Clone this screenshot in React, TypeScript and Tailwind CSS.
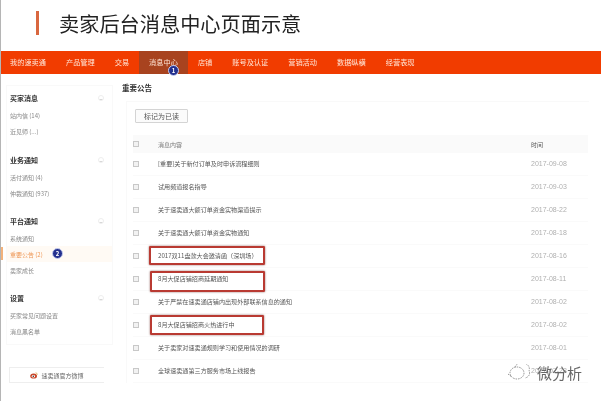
const nav = ["我的速卖通", "产品管理", "交易", "消息中心", "店铺", "账号及认证", "营销活动", "数据纵横", "经营表现"];

const sections = [
  { title: "买家消息", gap: "", items: ["站内信 (14)", "近见师 (...)"] },
  { title: "业务通知", gap: "mt-[14px]", items: ["活付通知 (4)", "仲裁通知 (937)"] },
  { title: "平台通知", gap: "mt-[13px]", items: ["系统通知", "重要公告 (2)", "卖家成长"] },
  { title: "设置", gap: "mt-[13px]", items: ["买家常见问题设置", "消息黑名单"] },
];

const rows = [
  { t: "[重要]关于新付订单及时申诉流程细则", d: "2017-09-08" },
  { t: "试用频道报名指导", d: "2017-09-03" },
  { t: "关于速卖通大额订单资金实物渠道提示", d: "2017-08-22" },
  { t: "关于速卖通大额订单资金实物通知", d: "2017-08-18" },
  { t: "2017双11盘款大会邀请函（深圳场）", d: "2017-08-16", box: "left-[16px] w-[116px] top-[1px] h-[19px]" },
  { t: "8月大促店铺招商延期通知", d: "2017-08-11", box: "left-[17px] w-[115px] top-[3px] h-[21px]" },
  { t: "关于严禁在速卖通店铺内出现外部联系信息的通知", d: "2017-08-02" },
  { t: "8月大促店铺招商火热进行中", d: "2017-08-02", box: "left-[17px] w-[114px] top-[1px] h-[20px]" },
  { t: "关于卖家对速卖通规则学习和使用情况的调研", d: "2017-08-01" },
  { t: "全球速卖通第三方服务市场上线报告", d: "2017-07-28" },
];

function Badge({ n, className }: { n: number; className: string }) {
  return (
    <span className={`absolute flex h-[11px] w-[11px] items-center justify-center rounded-full border border-[#c9d0f0] bg-[#23308f] text-[6px] font-bold leading-none text-white ${className}`}>
      {n}
    </span>
  );
}

function Check() {
  return <span className="block h-[6px] w-[6px] shrink-0 border border-[#c8c8c8] bg-[#f2f2f2]" />;
}

export default function App() {
  return (
    <div
      className="relative h-[401px] w-[601px] overflow-hidden border-l border-[#b5b5b5] bg-white blur-[0.35px]"
      style={{ fontFamily: '"Noto Sans CJK SC", "Liberation Sans", sans-serif' }}
    >
      <header className="flex h-[51px] items-start pl-[35px] pt-[11px]">
        <span className="h-[24px] w-[3px] bg-[#d9673f]" />
        <h1 className="ml-[20px] text-[20.2px] leading-[26px] text-[#222]">卖家后台消息中心页面示意</h1>
      </header>

      <nav className="flex h-[23px] items-stretch bg-[#f13c00] text-[7.2px] text-[#ffe5d6]">
        {nav.map((n, i) => (
          <span
            key={n}
            className={`flex items-center pr-[10px] ${i === 0 ? "pl-[9px]" : "pl-[10px]"} ${i === 3 ? "bg-[#a8431f]" : ""}`}
          >
            {n}
          </span>
        ))}
      </nav>
      <Badge n={1} className="left-[167px] top-[65px]" />

      <div className="flex items-start">
        <aside className="ml-[5px] w-[107px] shrink-0 pt-[11px]">
          <div className="h-[260px] border border-[#f9f9f9] pt-[5px]">
            {sections.map((s) => (
              <section key={s.title} className={s.gap}>
                <div className="flex h-[14px] items-center justify-between pl-[3px] pr-[8px] text-[7px] font-bold text-[#333]">
                  {s.title}
                  <span className="flex h-[6px] w-[6px] items-center justify-center rounded-full border border-[#eee] text-[5px] leading-none text-[#bbb]">−</span>
                </div>
                <ul className="pt-[2px]">
                  {s.items.map((it) => {
                    const on = it.startsWith("重要");
                    return (
                      <li
                        key={it}
                        className={`relative flex h-[16px] items-center pl-[3px] text-[6px] ${on ? "bg-[#fffaf4] text-[#ef9a5a]" : "text-[#888]"}`}
                      >
                        {on && <span className="absolute left-[-6px] top-[1px] h-[13px] w-[2px] bg-[#f2b27c]" />}
                        {it}
                        {on && <Badge n={2} className="left-[45px] top-[2px]" />}
                      </li>
                    );
                  })}
                </ul>
              </section>
            ))}
          </div>
          <div className="ml-[3px] mt-[22px] flex h-[16px] w-[95px] items-center justify-center gap-[3px] border border-[#eee] border-r-0 text-[6px] text-[#666]">
            <svg width="8" height="7" viewBox="0 0 8 7">
              <ellipse cx="3.6" cy="4" rx="3.4" ry="2.6" fill="#c9472b" />
              <ellipse cx="3.4" cy="4.2" rx="1.6" ry="1.3" fill="#fff" />
              <circle cx="3.3" cy="4.3" r="0.7" fill="#222" />
              <path d="M5.5 .8 A2 2 0 0 1 7.4 2.8" stroke="#e0a030" strokeWidth="0.7" fill="none" />
            </svg>
            速卖通官方微博
          </div>
        </aside>

        <main className="ml-[9px] w-[467px] shrink-0">
          <h2 className="flex h-[27px] items-center text-[7.5px] font-bold text-[#333]">重要公告</h2>
          <div className="ml-[4px] border-l border-t border-[#f9f9f9] pl-[6px] pt-[7px]">
            <button className="ml-[2px] flex h-[14px] w-[53px] items-center justify-center rounded-[1px] border border-[#d4d4d4] bg-[#fbfbfb] text-[7px] text-[#555]">
              标记为已读
            </button>
            <div className="mt-[12px] flex h-[18px] w-[455px] items-center bg-[#fafafa] text-[6px] text-[#777]">
              <Check />
              <span className="ml-[19px] flex-1">消息内容</span>
              <span className="w-[57px] text-[#555]">时间</span>
            </div>
            {rows.map((r) => (
              <div key={r.d + r.t} className="relative flex h-[23px] w-[455px] items-center border-b border-[#fafafa] text-[6.1px] text-[#555]">
                <Check />
                <span className="ml-[19px] flex-1">{r.t}</span>
                <span className="w-[57px] text-[7px] text-[#b0b0b0]" style={{ fontFamily: '"Liberation Sans", sans-serif' }}>{r.d}</span>
                {r.box && (
                  <span className={`absolute rounded-[1px] border-2 border-[#b93a32] shadow-[0_0_2px_#8a5a55] ${r.box}`} />
                )}
              </div>
            ))}
          </div>
        </main>
      </div>

      <div className="absolute right-[19px] top-[363px] flex items-center gap-[6px] text-[15px] leading-[20px] text-[#666]">
        <svg width="24" height="19" viewBox="0 0 24 19" fill="none" stroke="#666" strokeWidth="0.7" strokeDasharray="1.5 1">
          <ellipse cx="10" cy="9" rx="7" ry="6" />
          <path d="M8 3 A7 6 0 0 1 22 7 A6 5 0 0 1 18 14" />
          <path d="M1 10 L5 13" />
        </svg>
        微分析
      </div>
    </div>
  );
}
